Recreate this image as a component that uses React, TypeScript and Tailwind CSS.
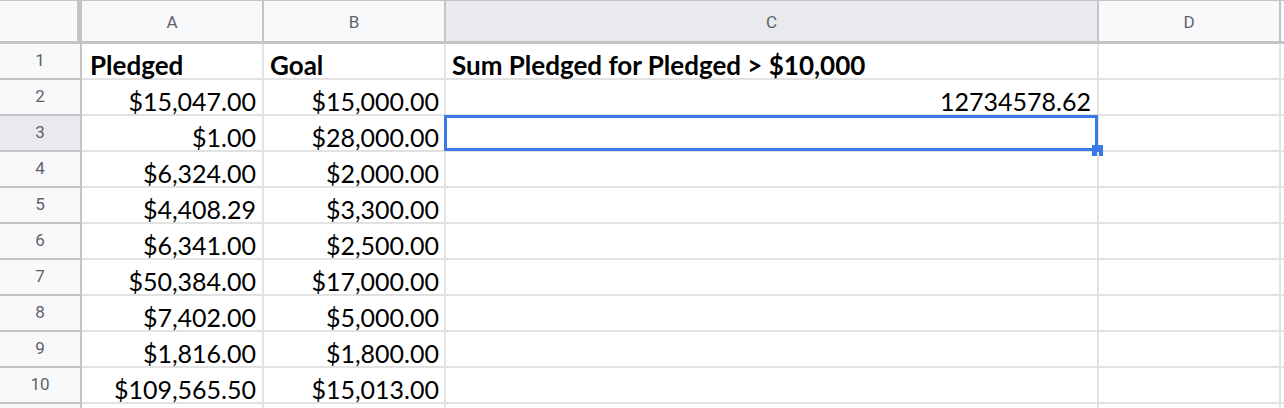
import React from "react"

const rows: [string, string, string][] = [
  ["Pledged", "Goal", "Sum Pledged for Pledged > $10,000"],
  ["$15,047.00", "$15,000.00", "12734578.62"],
  ["$1.00", "$28,000.00", ""],
  ["$6,324.00", "$2,000.00", ""],
  ["$4,408.29", "$3,300.00", ""],
  ["$6,341.00", "$2,500.00", ""],
  ["$50,384.00", "$17,000.00", ""],
  ["$7,402.00", "$5,000.00", ""],
  ["$1,816.00", "$1,800.00", ""],
  ["$109,565.50", "$15,013.00", ""],
  ["", "", ""],
]

const cell = "h-[36px] border-r-2 border-b-2 border-[#e2e2e3] flex items-end pb-0 leading-[25px] text-black whitespace-nowrap overflow-visible"
const colHead = "h-[44px] pt-[3px] border-t border-r-2 border-b-[3px] border-[#c4c4c4] flex items-center justify-center text-[17px] text-[#5f6368]"
const rowHead = "h-[36px] border-r-2 border-b-2 border-[#c4c4c4] flex items-center justify-center text-[17px] text-[#5f6368]"

export default function App() {
  return (
    <div className="w-[1284px] h-[408px] overflow-hidden bg-white font-['Lato',sans-serif]">
      <div className="grid grid-cols-[82px_182px_182px_653px_182px_1fr] font-['Roboto',sans-serif]">
        <div className="h-[44px] border-t border-r-[5px] border-b-[3px] border-[#c4c4c4] bg-[#f8f9fa]" />
        <div className={`${colHead} bg-[#f8f9fa]`}>A</div>
        <div className={`${colHead} bg-[#f8f9fa]`}>B</div>
        <div className={`${colHead} bg-[#e8eaed]`}>C</div>
        <div className={`${colHead} bg-[#f8f9fa]`}>D</div>
        <div className="h-[44px] border-t border-b-[3px] border-[#c4c4c4] bg-[#f8f9fa]" />

        {rows.map((r, i) => {
          const n = i + 1
          const head = n === 1
          const text = head ? "font-bold text-[26px]" : "text-[25px]"
          return (
            <React.Fragment key={n}>
              <div className={`${rowHead} ${n === 3 ? "bg-[#e8eaed]" : "bg-[#f8f9fa]"}`}>{n <= 10 ? n : ""}</div>
              <div className={`${cell} font-['Lato',sans-serif] ${text} ${head ? "justify-start pl-[8px]" : "justify-end pr-[6px]"}`}>
                {r[0]}
              </div>
              <div className={`${cell} font-['Lato',sans-serif] ${text} ${head ? "justify-start pl-[6px]" : "justify-end pr-[5px]"}`}>
                {r[1]}
              </div>
              <div className={`${cell} relative font-['Lato',sans-serif] ${text} ${head ? "justify-start pl-[6px]" : "justify-end pr-[6px]"}`}>
                {r[2]}
                {n === 3 && (
                  <div className="absolute -left-[2px] -top-[1px] -right-[1px] -bottom-[1px] border-[3px] border-[#3b78e7]">
                    <div className="absolute -right-[8px] -bottom-[8px] w-[11px] h-[11px] bg-[#3b78e7]" />
                  </div>
                )}
              </div>
              <div className={cell} />
              <div className="h-[36px] border-b-2 border-[#e2e2e3]" />
            </React.Fragment>
          )
        })}
      </div>
    </div>
  )
}
